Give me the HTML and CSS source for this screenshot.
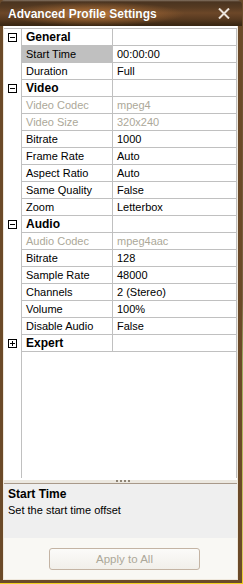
FILE: index.html
```html
<!DOCTYPE html>
<html>
<head>
<meta charset="utf-8">
<link rel="stylesheet" href="styles.css">
</head>
<body>
<div class="window">
  <div class="titlebar">
    <span class="title">Advanced Profile Settings</span>
    <svg class="close" width="12" height="11" viewBox="0 0 12 11"><path d="M1 0.5 L11 10.5 M11 0.5 L1 10.5" stroke="#ece4dc" stroke-width="2" fill="none"/></svg>
  </div>
  <div class="frame">
    <div class="body">
      <div class="grid">
        <div class="row cat"><div class="g"><span class="box minus"></span></div><div class="n">General</div><div class="v"></div></div>
        <div class="row"><div class="g"></div><div class="n sel">Start Time</div><div class="v">00:00:00</div></div>
        <div class="row"><div class="g"></div><div class="n">Duration</div><div class="v">Full</div></div>
        <div class="row cat"><div class="g"><span class="box minus"></span></div><div class="n">Video</div><div class="v"></div></div>
        <div class="row dis"><div class="g"></div><div class="n">Video Codec</div><div class="v">mpeg4</div></div>
        <div class="row dis"><div class="g"></div><div class="n">Video Size</div><div class="v">320x240</div></div>
        <div class="row"><div class="g"></div><div class="n">Bitrate</div><div class="v">1000</div></div>
        <div class="row"><div class="g"></div><div class="n">Frame Rate</div><div class="v">Auto</div></div>
        <div class="row"><div class="g"></div><div class="n">Aspect Ratio</div><div class="v">Auto</div></div>
        <div class="row"><div class="g"></div><div class="n">Same Quality</div><div class="v">False</div></div>
        <div class="row"><div class="g"></div><div class="n">Zoom</div><div class="v">Letterbox</div></div>
        <div class="row cat"><div class="g"><span class="box minus"></span></div><div class="n">Audio</div><div class="v"></div></div>
        <div class="row dis"><div class="g"></div><div class="n">Audio Codec</div><div class="v">mpeg4aac</div></div>
        <div class="row"><div class="g"></div><div class="n">Bitrate</div><div class="v">128</div></div>
        <div class="row"><div class="g"></div><div class="n">Sample Rate</div><div class="v">48000</div></div>
        <div class="row"><div class="g"></div><div class="n">Channels</div><div class="v">2 (Stereo)</div></div>
        <div class="row"><div class="g"></div><div class="n">Volume</div><div class="v">100%</div></div>
        <div class="row"><div class="g"></div><div class="n">Disable Audio</div><div class="v">False</div></div>
        <div class="row cat"><div class="g"><span class="box plus"></span></div><div class="n">Expert</div><div class="v"></div></div>
      </div>
      <div class="splitter"><span class="grip"></span></div>
      <div class="desc">
        <div class="desc-title">Start Time</div>
        <div class="desc-text">Set the start time offset</div>
      </div>
      <div class="footer">
        <div class="button">Apply to All</div>
      </div>
    </div>
  </div>
</div>
</body>
</html>
```
FILE: styles.css
```css
html, body {
  margin: 0;
  padding: 0;
}
body {
  width: 243px;
  height: 584px;
  overflow: hidden;
  background: linear-gradient(#6a4a2a 0, #7a6040 300px, #9aa860 360px, #d8c860 560px, #f0d020 584px);
  font-family: "Liberation Sans", Arial, sans-serif;
  font-size: 11px;
  color: #000;
}
.window {
  width: 242px;
  height: 583px;
  display: flex;
  flex-direction: column;
}
.titlebar {
  height: 26px;
  flex: none;
  border-radius: 5px 5px 0 0;
  background:
    radial-gradient(ellipse 90px 12px at 95px 14px, rgba(205,130,62,0.8), rgba(205,130,62,0) 100%),
    linear-gradient(#857565 0, #4a3420 2px, #553a22 7px, #6c4728 13px, #583a20 19px, #3a2713 25px);
  display: flex;
  align-items: center;
  padding: 0 0 0 8px;
  box-sizing: border-box;
}
.title {
  color: #fff;
  font-weight: bold;
  font-size: 12px;
  line-height: 14px;
  padding-top: 2px;
  flex: 1;
  text-shadow: 0 0 1px rgba(0,0,0,0.4);
}
.close {
  margin-right: 12px;
  margin-top: 1px;
}
.frame {
  flex: 1;
  border-style: solid;
  border-color: #6b4a28;
  border-width: 0 4px 3px 3px;
  display: flex;
}
.body {
  flex: 1;
  border: 1px solid #efe8dc;
  border-top: none;
  background: #fff;
  display: flex;
  flex-direction: column;
  padding-top: 2px;
}
.grid {
  height: 449px;
  border-top: 1px solid #c0c0c0;
  border-right: 1px solid #c0c0c0;
  background: linear-gradient(#c0c0c0, #c0c0c0) 17px 0 / 1px 100% no-repeat, #fff;
  flex: none;
}
.row {
  display: flex;
  height: 17px;
}
.g {
  width: 17px;
  flex: none;
  display: flex;
  align-items: center;
  padding-left: 4px;
  box-sizing: border-box;
}
.n, .v {
  height: 16px;
  line-height: 16px;
  border-bottom: 1px solid #c0c0c0;
  white-space: nowrap;
  overflow: hidden;
}
.n {
  width: 86px;
  margin-left: 1px;
  padding-left: 4px;
  border-right: 1px solid #c0c0c0;
}
.v {
  width: 119px;
  padding-left: 4px;
}
.sel {
  background: #c0c0c0;
}
.cat .n {
  font-weight: bold;
  font-size: 12px;
}
.dis .n, .dis .v {
  color: #aca899;
}
.box {
  width: 7px;
  height: 7px;
  border: 1px solid #000;
  background:
    linear-gradient(#000, #000) center / 5px 1px no-repeat, #fff;
}
.box.plus {
  background:
    linear-gradient(#000, #000) center / 5px 1px no-repeat,
    linear-gradient(#000, #000) center / 1px 5px no-repeat, #fff;
}
.splitter {
  height: 5px;
  border-bottom: 1px solid #a8998a;
  background: linear-gradient(#fff 0, #fff 2px, #ece8e0 2px);
  display: flex;
  justify-content: center;
  flex: none;
}
.grip {
  width: 14px;
  height: 2px;
  margin-top: 2px;
  margin-left: 4px;
  background: repeating-linear-gradient(90deg, #8f8576 0 2px, transparent 2px 4px);
}
.desc {
  height: 54px;
  background: #efefef;
  padding: 2px 0 0 4px;
  box-sizing: border-box;
  flex: none;
  line-height: 16px;
}
.desc-title {
  font-weight: bold;
  font-size: 12px;
}
.footer {
  flex: 1;
  background: #f9f8f4;
  padding-top: 10px;
}
.button {
  margin-left: 45px;
  width: 151px;
  height: 22px;
  box-sizing: border-box;
  border: 1px solid #c4b4a4;
  border-radius: 3px;
  background: linear-gradient(#fbfbf9, #f1efea);
  color: #aca899;
  text-align: center;
  line-height: 20px;
  font-size: 11.5px;
}
```
